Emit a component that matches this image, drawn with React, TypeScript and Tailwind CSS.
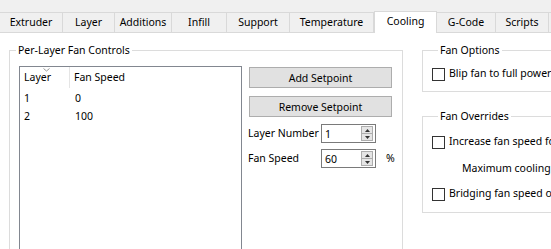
import type { ReactNode } from 'react';

const tabs = [
  { label: 'Extruder', w: 'w-[63px]' },
  { label: 'Layer', w: 'w-[52px]' },
  { label: 'Additions', w: 'w-[57px]' },
  { label: 'Infill', w: 'w-[55px]' },
  { label: 'Support', w: 'w-[63px]' },
  { label: 'Temperature', w: 'w-[84px]' },
  { label: 'Cooling', w: 'w-[63px]', active: true },
  { label: 'G-Code', w: 'w-[59px]' },
  { label: 'Scripts', w: 'w-[53px]' },
  { label: '', w: 'w-[60px]' },
];

const rows = [
  { layer: '1', speed: '0' },
  { layer: '2', speed: '100' },
];

function Group({ title, className, children }: { title: string; className: string; children: ReactNode }) {
  return (
    <fieldset className={`border border-[#dcdcdc] ${className}`}>
      <legend className="ml-[6px] px-[2px] leading-[16px]">{title}</legend>
      {children}
    </fieldset>
  );
}

function Check({ label }: { label: string }) {
  return (
    <div className="flex items-center h-[16px]">
      <span className="w-[13px] h-[13px] border border-[#333] bg-white shrink-0" />
      <span className="ml-[4px] whitespace-nowrap">{label}</span>
    </div>
  );
}

function Spin({ value }: { value: string }) {
  return (
    <div className="flex items-center w-[55px] h-[19px] border border-[#7a7a7a] bg-white pl-[3px] pr-[2px]">
      <span className="flex-1 leading-[16px]">{value}</span>
      <div className="flex flex-col w-[12px] h-[15px] border border-[#adadad] bg-[#e5e5e5]">
        <div className="flex-1 flex items-center justify-center border-b border-[#adadad]">
          <svg width="5" height="3" viewBox="0 0 5 3"><path d="M0 3 L2.5 0 L5 3 Z" fill="#333" /></svg>
        </div>
        <div className="flex-1 flex items-center justify-center">
          <svg width="5" height="3" viewBox="0 0 5 3"><path d="M0 0 L2.5 3 L5 0 Z" fill="#333" /></svg>
        </div>
      </div>
    </div>
  );
}

export default function App() {
  return (
    <div className="w-[551px] h-[249px] overflow-hidden bg-white text-[10.5px] text-black font-['Noto_Sans',sans-serif]">
      <div className="h-[33px] bg-[#f0f0f0] border-b border-[#d9d9d9] flex items-end">
        {tabs.map((t) =>
          t.active ? (
            <div key={t.label} className={`${t.w} shrink-0 h-[22px] -mb-px bg-white border border-b-0 border-[#d9d9d9] flex items-center justify-center pb-[2px]`}>
              {t.label}
            </div>
          ) : (
            <div key={t.label || 'more'} className={`${t.w} shrink-0 h-[20px] bg-[#f0f0f0] border border-b-0 border-l-0 border-[#d9d9d9] flex items-center justify-center`}>
              {t.label}
            </div>
          ),
        )}
      </div>

      <div className="flex items-start">
        <Group title="Per-Layer Fan Controls" className="ml-[9px] mt-[9px] w-[394px] h-[230px] shrink-0">
          <div className="flex items-start ml-[9px] mt-[8px]">
            <div className="w-[223px] h-[200px] border border-[#828790] bg-white shrink-0">
              <div className="relative flex h-[23px] items-end pb-[2px]">
                <div className="relative w-[50px] h-full flex items-center pl-[4px] border-r border-[#e5e5e5]">
                  Layer
                  <svg className="absolute left-[23px] top-[1px]" width="7" height="4" viewBox="0 0 7 4">
                    <path d="M0.5 0.5 L3.5 3 L6.5 0.5" fill="none" stroke="#999" strokeWidth="1" />
                  </svg>
                </div>
                <div className="pl-[4px] h-full flex items-center">Fan Speed</div>
              </div>
              {rows.map((r) => (
                <div key={r.layer} className="flex h-[18px] items-center">
                  <div className="w-[50px] pl-[4px]">{r.layer}</div>
                  <div className="pl-[5px]">{r.speed}</div>
                </div>
              ))}
            </div>

            <div className="ml-[7px] mt-px flex flex-col">
              <button className="w-[143px] h-[21px] bg-[#e1e1e1] border border-[#adadad] leading-[16px]">Add Setpoint</button>
              <button className="mt-[8px] w-[143px] h-[21px] bg-[#e1e1e1] border border-[#adadad] leading-[16px]">Remove Setpoint</button>
              <div className="mt-[7px] flex items-center">
                <span className="w-[73px] -ml-px whitespace-nowrap">Layer Number</span>
                <Spin value="1" />
              </div>
              <div className="mt-[6px] flex items-center">
                <span className="w-[73px] -ml-px whitespace-nowrap">Fan Speed</span>
                <Spin value="60" />
                <span className="ml-[10px]">%</span>
              </div>
            </div>
          </div>
        </Group>

        <div className="ml-[19px] mt-[9px] flex flex-col shrink-0">
          <Group title="Fan Options" className="w-[200px] h-[50px] pl-[9px]">
            <div className="mt-[8px]"><Check label="Blip fan to full power at start" /></div>
          </Group>
          <Group title="Fan Overrides" className="mt-[16px] w-[200px] h-[105px] pl-[9px]">
            <div className="mt-[10px]"><Check label="Increase fan speed for small layers" /></div>
            <div className="mt-[10px] ml-[30px] whitespace-nowrap leading-[16px]">Maximum cooling fan speed</div>
            <div className="mt-[10px]"><Check label="Bridging fan speed override" /></div>
          </Group>
        </div>
      </div>
    </div>
  );
}
